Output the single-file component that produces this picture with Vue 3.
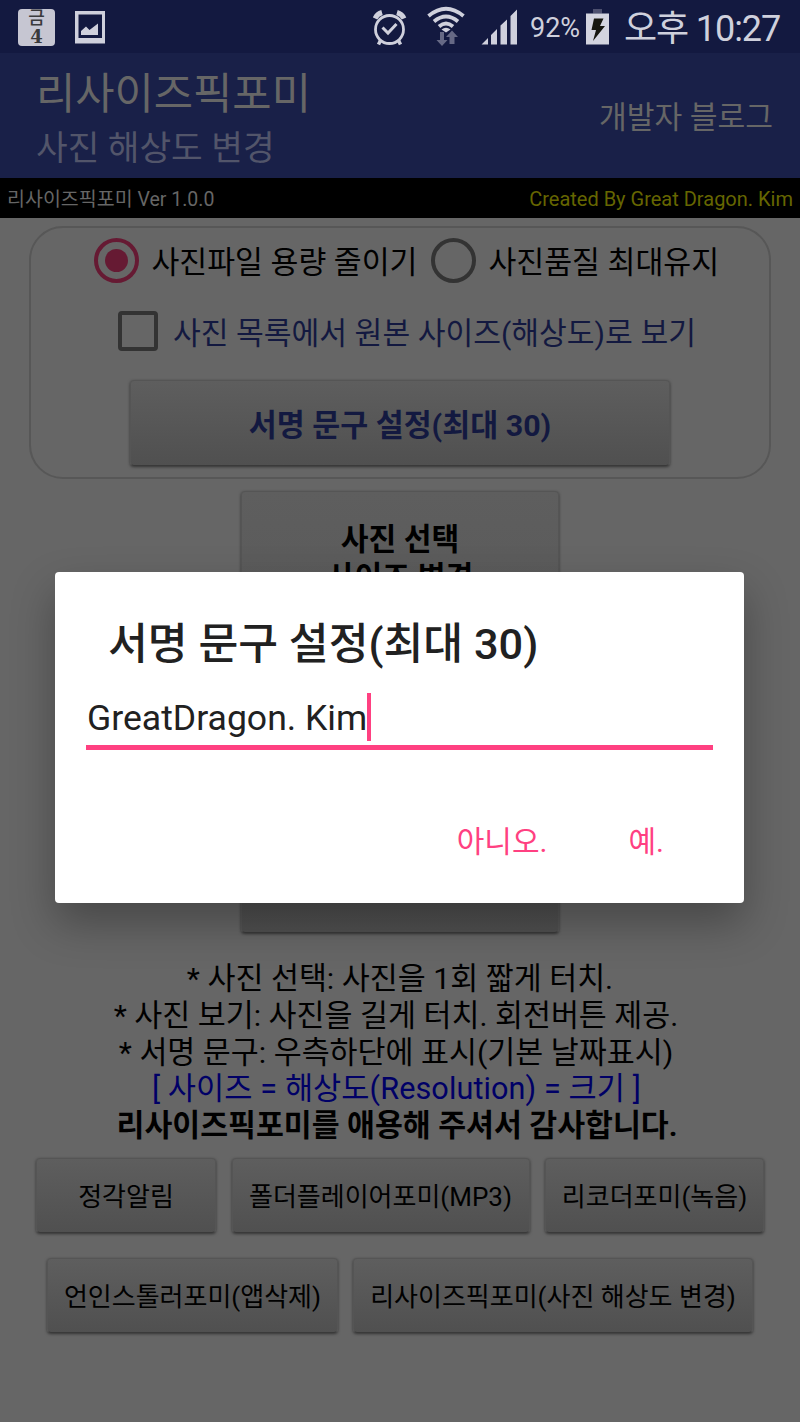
<template>
  <div class="screen">
    <header class="status">
      <div class="status-left">
        <div class="date-icon"><span class="day">금</span><span class="num">4</span></div>
        <svg class="pic-icon" width="32" height="34" viewBox="0 0 32 34">
          <path d="M0 0H30V32.500H0ZM3.500 3.500V27H27V3.500Z" fill="#cfd0dc" fill-rule="evenodd" />
          <path d="M6 24V20L11 15.500L14.500 19L23 12.500V24Z" fill="#cfd0dc" />
        </svg>
      </div>
      <div class="status-right">
        <svg class="alarm" width="34" height="36" viewBox="0 0 34 36" fill="none" stroke="#cfd0dc">
          <circle cx="16.500" cy="19.500" r="14" stroke-width="2.800" />
          <path d="M9.500 17.500L15 23L23.500 14" stroke-width="3" />
          <path d="M2 8.500Q4 4 9 2.500M24 2.500Q29 4 31 8.500" stroke-width="5" />
          <path d="M7.500 30.500L5.500 34.500M25.500 30.500L27.500 34.500" stroke-width="3.500" />
        </svg>
        <svg class="wifi" width="38" height="42" viewBox="0 0 38 42" fill="none">
          <g stroke="#cfd0dc" stroke-width="3.800">
            <path d="M1.500 10Q19 -4.500 36.500 10" />
            <path d="M7 15.500Q19 5.500 31 15.500" />
            <path d="M12 20.500Q19 14.500 26 20.500" />
          </g>
          <path d="M14.500 23.500Q19 20 23.500 23.500L19 26.500Z" fill="#cfd0dc" />
          <path d="M13 26H17V34H20.500L15 40L9.500 34H13ZM22.500 38V31H19L25 24.500L31 31H27.500V38Z" fill="#666985" />
        </svg>
        <svg class="signal" width="37" height="36" viewBox="0 0 37 36" fill="#cfd0dc">
          <path d="M0.500 35.500L7 29V35.500ZM10 26L16 20V35.500H10ZM19.500 16.500L26 10.500V35.500H19.500ZM29.500 7L36 0.500V35.500H29.500Z" />
        </svg>
        <span class="percent">92%</span>
        <svg class="battery" width="23" height="36" viewBox="0 0 23 36">
          <path d="M7 0H16V4.500H7Z" fill="#4d506f" />
          <path d="M0 4.500H23V35.500H0Z" fill="#d3d4df" />
          <path d="M8 9.500H17.500L14 17H19L7 32L10 21H5.500Z" fill="#16160f" />
        </svg>
        <span class="clock">오후 10:27</span>
      </div>
    </header>

    <div class="appbar">
      <div class="titles">
        <div class="title">리사이즈픽포미</div>
        <div class="subtitle">사진 해상도 변경</div>
      </div>
      <div class="blog">개발자 블로그</div>
    </div>

    <div class="strip">
      <span class="version">리사이즈픽포미 Ver 1.0.0</span>
      <span class="author">Created By Great Dragon. Kim</span>
    </div>

    <main>
      <section class="panel">
        <div class="radios">
          <span class="radio on"></span>
          <span class="radio-label first">사진파일 용량 줄이기</span>
          <span class="radio"></span>
          <span class="radio-label">사진품질 최대유지</span>
        </div>
        <div class="check-row">
          <span class="checkbox"></span>
          <span class="check-label">사진 목록에서 원본 사이즈(해상도)로 보기</span>
        </div>
        <button class="btn sign">서명 문구 설정(최대 30)</button>
      </section>

      <button class="btn select">
        <span>사진 선택</span>
        <span>사이즈 변경</span>
      </button>

      <div class="notes">
        <p v-for="n in notes" :key="n.text" :class="n.kind">{{ n.text }}</p>
      </div>

      <div class="apps row-a">
        <button v-for="(a, i) in appsA" :key="a" class="btn" :class="'a' + i">{{ a }}</button>
      </div>
      <div class="apps row-b">
        <button v-for="(b, i) in appsB" :key="b" class="btn" :class="'b' + i">{{ b }}</button>
      </div>
    </main>

    <div class="dialog">
      <h2>서명 문구 설정(최대 30)</h2>
      <div class="field"><span>{{ signature }}</span><i class="caret"></i></div>
      <div class="actions">
        <span class="no">아니오.</span>
        <span class="yes">예.</span>
      </div>
    </div>
  </div>
</template>

<script setup>
import { ref } from 'vue'

const signature = ref('GreatDragon. Kim')

const notes = [
  { text: '* 사진 선택: 사진을 1회 짧게 터치.', kind: 'n1' },
  { text: '* 사진 보기: 사진을 길게 터치. 회전버튼 제공.', kind: 'n2' },
  { text: '* 서명 문구: 우측하단에 표시(기본 날짜표시)', kind: 'n3' },
  { text: '[ 사이즈 = 해상도(Resolution) = 크기 ]', kind: 'blue' },
  { text: '리사이즈픽포미를 애용해 주셔서 감사합니다.', kind: 'bold' }
]
const appsA = ['정각알림', '폴더플레이어포미(MP3)', '리코더포미(녹음)']
const appsB = ['언인스톨러포미(앱삭제)', '리사이즈픽포미(사진 해상도 변경)']
</script>

<style>
body { background: #666; }
</style>

<style scoped>
.screen { position: relative; width: 800px; height: 1422px; overflow: hidden; background: #666; font-family: Roboto, "Noto Sans CJK KR", sans-serif; color: #000; white-space: nowrap; }
svg { display: block; flex-shrink: 0; }

.status { display: flex; justify-content: space-between; height: 53px; background: #131940; color: #cfd0dc; }
.status-left { display: flex; padding: 9px 0 0 18px; gap: 20px; }
.date-icon { display: flex; flex-direction: column; align-items: center; width: 37px; height: 37px; border-radius: 4px; background: #c6c6d2; color: #3a3a3c; }
.day { font-size: 18px; line-height: 18px; font-weight: 500; }
.num { font: bold 18px/19px "DejaVu Serif", serif; }
.pic-icon { margin-top: 2px; }
.status-right { display: flex; }
.alarm { margin: 10px 0 0; }
.wifi { margin: 6px 0 0 20px; }
.signal { margin: 9px 0 0 16px; }
.percent { font-size: 27px; line-height: 57px; margin-left: 12px; width: 50px; }
.battery { margin: 9px 0 0 6px; }
.clock { font-size: 36px; line-height: 59px; margin-left: 15px; width: 176px; letter-spacing: -1.1px; }

.appbar { display: flex; justify-content: space-between; height: 125px; background: #192048; }
.titles { padding: 13px 0 0 36px; }
.title { font-size: 42.7px; line-height: 57px; color: #666; }
.subtitle { font-size: 34.4px; line-height: 50px; color: #52556a; }
.blog { font-size: 30.2px; line-height: 129px; padding-right: 27px; color: #666; }

.strip { display: flex; justify-content: space-between; height: 40px; padding: 0 7px; background: #000; font-size: 20px; line-height: 43px; }
.version { font-size: 19.5px; color: #666; }
.author { color: #666600; }

.panel { display: flex; flex-direction: column; align-items: center; box-sizing: border-box; width: 742px; height: 253px; margin: 8px auto 0; border: 2px solid #575757; border-radius: 34px; }
.radios { display: flex; align-items: center; height: 45px; margin-top: 10px; width: 612px; }
.radio { display: flex; align-items: center; justify-content: center; box-sizing: border-box; flex-shrink: 0; width: 45px; height: 45px; border: 4.5px solid #333; border-radius: 50%; }
.radio.on { border-color: #661a33; }
.radio.on::after { content: ""; width: 23px; height: 23px; border-radius: 50%; background: #661a33; }
.radio-label { flex-shrink: 0; font-size: 30.3px; line-height: 50px; height: 45px; margin-left: 12.5px; }
.radio-label.first { width: 279.5px; }
.check-row { display: flex; align-items: center; height: 40px; margin-top: 28px; width: 564px; }
.checkbox { box-sizing: border-box; width: 40px; height: 40px; border: 4px solid #333; border-radius: 4px; flex-shrink: 0; }
.check-label { font-size: 30.2px; margin-left: 15px; color: #131940; }

.btn { display: flex; flex-direction: column; align-items: center; justify-content: center; flex-shrink: 0; box-sizing: border-box; padding: 0; border: 1px solid #555; border-bottom-color: #3a3a3a; border-radius: 4px; background: linear-gradient(#5e5e5e, #505050); box-shadow: 0 1px 3px rgba(0, 0, 0, .5); font-family: inherit; font-size: 26px; color: #000; white-space: nowrap; }
.sign { width: 540px; height: 86px; margin-top: 29px; font-size: 30.4px; font-weight: 700; color: #131940; }
.select { width: 318px; height: 442px; margin: 12px auto 0; justify-content: flex-start; padding-top: 29px; font-size: 30.2px; line-height: 38px; font-weight: 700; }

.notes { display: flex; flex-direction: column; align-items: center; margin-top: 28px; font-size: 30.4px; }
.notes p { margin: 0; height: 36.8px; line-height: 36.8px; }
.notes .n2, .notes .n3 { padding-right: 8px; }
.notes .blue { padding-right: 7px; color: #000066; font-size: 30.6px; letter-spacing: .1px; }
.notes .bold { padding-right: 6px; font-size: 30.3px; font-weight: 700; }

.apps { display: flex; justify-content: center; gap: 15.5px; }
.apps .btn { height: 75px; padding-bottom: 2px; }
.row-a { margin-top: 13px; }
.row-b { margin-top: 25px; gap: 15px; }
.a0 { width: 180px; }
.a1 { width: 298px; }
.a2 { width: 219px; }
.b0 { width: 291px; }
.b1 { width: 400px; }

.dialog { position: absolute; left: 55px; top: 572px; width: 689px; height: 331px; box-sizing: border-box; padding: 41px 31px 0; border-radius: 4px; background: #fff; color: #212121; box-shadow: 0 20px 44px rgba(0, 0, 0, .3); }
h2 { margin: 0 0 0 22px; font-size: 43.3px; line-height: 64px; font-weight: 500; }
.field { display: flex; align-items: flex-end; box-sizing: border-box; height: 63px; margin-top: 10px; padding: 0 0 4px 1px; border-bottom: 5px solid #ff4081; font-size: 35.6px; line-height: 46px; }
.caret { width: 4px; height: 48px; background: #ff4081; }
.actions { display: flex; justify-content: flex-end; margin-top: 67px; padding-right: 49px; gap: 81px; font-size: 30px; line-height: 50px; color: #ff4081; }
</style>
